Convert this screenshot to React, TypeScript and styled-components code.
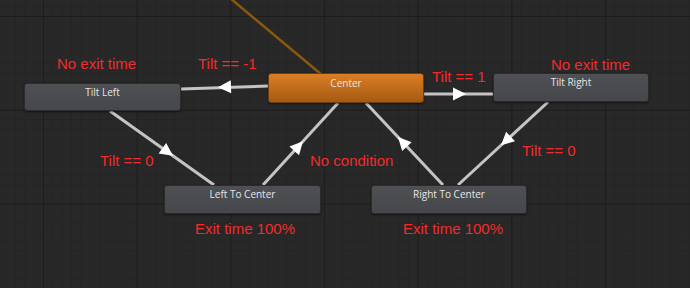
import { FC } from "react";
import styled, { createGlobalStyle } from "styled-components";

const GlobalStyle = createGlobalStyle`
  html, body {
    margin: 0;
    padding: 0;
    background: #282828;
  }
`;

const Canvas = styled.div`
  position: relative;
  width: 690px;
  height: 288px;
  overflow: hidden;
  background-color: #282828;
  background-image:
    linear-gradient(to right, #1d1d1d 1px, transparent 1px),
    linear-gradient(to bottom, #1d1d1d 1px, transparent 1px),
    linear-gradient(to right, #252525 1px, transparent 1px),
    linear-gradient(to bottom, #252525 1px, transparent 1px);
  background-size: 93.7px 93.7px, 93.7px 93.7px, 9.37px 9.37px, 9.37px 9.37px;
  background-position: 43px 16px, 43px 16px, 43px 16px, 43px 16px;
`;

const Links = styled.svg`
  position: absolute;
  left: 0;
  top: 0;
  width: 690px;
  height: 288px;
`;

const Node = styled.div<{ $x: number; $y: number; $w: number; $h: number; $active?: boolean }>`
  position: absolute;
  left: ${(p) => p.$x}px;
  top: ${(p) => p.$y}px;
  width: ${(p) => p.$w}px;
  height: ${(p) => p.$h}px;
  box-sizing: border-box;
  padding-top: ${(p) => (p.$active ? 3 : 2)}px;
  border-radius: 3px;
  border: 1px solid ${(p) => (p.$active ? "#6e3d0c" : "#2b2c2e")};
  background: ${(p) =>
    p.$active
      ? "linear-gradient(to bottom, #da7e24, #a55a12)"
      : "linear-gradient(to bottom, #4e5054, #45474b)"};
  box-shadow: 0 1px 2px rgba(0, 0, 0, 0.55);
  font-family: "Open Sans", "DejaVu Sans", sans-serif;
  font-size: 10px;
  font-weight: 500;
  line-height: 12px;
  color: #e6e6e6;
  text-align: center;
`;

const Note = styled.div<{ $x: number; $y: number }>`
  position: absolute;
  left: ${(p) => p.$x}px;
  top: ${(p) => p.$y - 7.5}px;
  font-family: "Liberation Sans", Arial, sans-serif;
  font-size: 15px;
  line-height: 15px;
  color: #f22b2b;
  white-space: nowrap;
`;

type Pt = [number, number];

const arrowPoints = (a: Pt, b: Pt, tip: Pt) => {
  const dx = b[0] - a[0];
  const dy = b[1] - a[1];
  const len = Math.hypot(dx, dy);
  const ux = dx / len;
  const uy = dy / len;
  const bx = tip[0] - ux * 13;
  const by = tip[1] - uy * 13;
  const nx = -uy * 6.5;
  const ny = ux * 6.5;
  return `${tip[0]},${tip[1]} ${bx + nx},${by + ny} ${bx - nx},${by - ny}`;
};

const transitions: { from: Pt; to: Pt; tip: Pt }[] = [
  { from: [268, 86], to: [181, 89], tip: [218, 87.3] },
  { from: [424, 94], to: [493, 94], tip: [466, 94] },
  { from: [110, 111], to: [214, 185], tip: [173, 155.8] },
  { from: [263, 185], to: [338, 103], tip: [303, 141.3] },
  { from: [443, 185], to: [366, 103], tip: [398, 137.1] },
  { from: [548, 102], to: [458, 185], tip: [501, 145.3] },
];

const nodes = [
  { name: "Tilt Left", x: 24, y: 83, w: 157, h: 28 },
  { name: "Center", x: 268, y: 73, w: 156, h: 30, active: true },
  { name: "Tilt Right", x: 493, y: 73, w: 156, h: 29 },
  { name: "Left To Center", x: 164, y: 185, w: 157, h: 29 },
  { name: "Right To Center", x: 371, y: 185, w: 156, h: 29 },
];

const notes = [
  { text: "No exit time", x: 57, y: 63 },
  { text: "Tilt == -1", x: 198, y: 63 },
  { text: "Tilt == 1", x: 432, y: 76 },
  { text: "No exit time", x: 551, y: 64 },
  { text: "Tilt == 0", x: 100, y: 160 },
  { text: "No condition", x: 310, y: 160 },
  { text: "Tilt == 0", x: 522, y: 150 },
  { text: "Exit time 100%", x: 195, y: 228 },
  { text: "Exit time 100%", x: 403, y: 228 },
];

const App: FC = () => (
  <>
    <GlobalStyle />
    <Canvas>
      <Links viewBox="0 0 690 288">
        <line x1={230} y1={-2} x2={322} y2={75} stroke="#8a5810" strokeWidth={2.5} />
        {transitions.map((t, i) => (
          <g key={i}>
            <line
              x1={t.from[0]}
              y1={t.from[1]}
              x2={t.to[0]}
              y2={t.to[1]}
              stroke="#c4c4c4"
              strokeWidth={3}
            />
            <polygon points={arrowPoints(t.from, t.to, t.tip)} fill="#ffffff" />
          </g>
        ))}
      </Links>
      {nodes.map((n) => (
        <Node key={n.name} $x={n.x} $y={n.y} $w={n.w} $h={n.h} $active={n.active}>
          {n.name}
        </Node>
      ))}
      {notes.map((n, i) => (
        <Note key={i} $x={n.x} $y={n.y}>
          {n.text}
        </Note>
      ))}
    </Canvas>
  </>
);

export default App;
